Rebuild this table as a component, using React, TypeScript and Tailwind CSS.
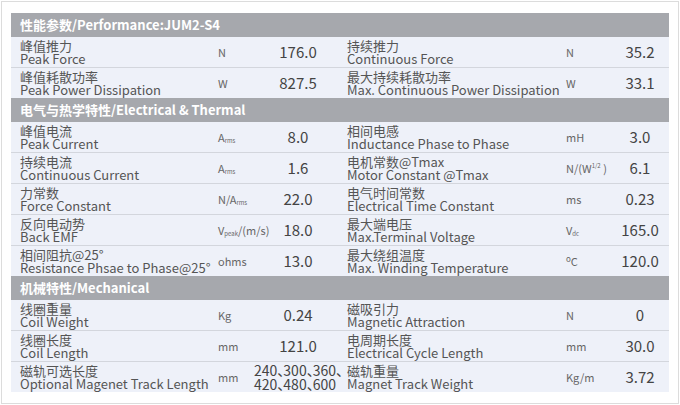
import React from "react";

type Cell = { zh: string; en: string; unit: React.ReactNode; value: React.ReactNode };
type Row = [Cell, Cell];

const U = ({ children }: { children: React.ReactNode }) => <>{children}</>;
const sub = (s: string) => <span className="text-[6px] align-[-1px]">{s}</span>;
const D = () => <span className="mr-[-8px]">、</span>;

const perf: Row[] = [
  [
    { zh: "峰值推力", en: "Peak Force", unit: "N", value: "176.0" },
    { zh: "持续推力", en: "Continuous Force", unit: "N", value: "35.2" },
  ],
  [
    { zh: "峰值耗散功率", en: "Peak Power Dissipation", unit: "W", value: "827.5" },
    { zh: "最大持续耗散功率", en: "Max. Continuous Power Dissipation", unit: "W", value: "33.1" },
  ],
];

const elec: Row[] = [
  [
    { zh: "峰值电流", en: "Peak Current", unit: <U>A{sub("rms")}</U>, value: "8.0" },
    { zh: "相间电感", en: "Inductance Phase to Phase", unit: "mH", value: "3.0" },
  ],
  [
    { zh: "持续电流", en: "Continuous Current", unit: <U>A{sub("rms")}</U>, value: "1.6" },
    {
      zh: "电机常数@Tmax",
      en: "Motor Constant @Tmax",
      unit: (
        <U>
          N/(W<span className="text-[6px] align-[5px]">1/2</span> )
        </U>
      ),
      value: "6.1",
    },
  ],
  [
    { zh: "力常数", en: "Force Constant", unit: <U>N/A{sub("rms")}</U>, value: "22.0" },
    { zh: "电气时间常数", en: "Electrical Time Constant", unit: "ms", value: "0.23" },
  ],
  [
    { zh: "反向电动势", en: "Back EMF", unit: <U>V{sub("peak")}/(m/s)</U>, value: "18.0" },
    { zh: "最大端电压", en: "Max.Terminal Voltage", unit: <U>V{sub("dc")}</U>, value: "165.0" },
  ],
  [
    { zh: "相间阻抗@25°", en: "Resistance Phsae to Phase@25°", unit: "ohms", value: "13.0" },
    {
      zh: "最大绕组温度",
      en: "Max. Winding Temperature",
      unit: (
        <U>
          <span className="text-[8px] align-[4px]">o</span>C
        </U>
      ),
      value: "120.0",
    },
  ],
];

const mech: Row[] = [
  [
    { zh: "线圈重量", en: "Coil Weight", unit: "Kg", value: "0.24" },
    { zh: "磁吸引力", en: "Magnetic Attraction", unit: "N", value: "0" },
  ],
  [
    { zh: "线圈长度", en: "Coil Length", unit: "mm", value: "121.0" },
    { zh: "电周期长度", en: "Electrical Cycle Length", unit: "mm", value: "30.0" },
  ],
  [
    {
      zh: "磁轨可选长度",
      en: "Optional Magenet Track Length",
      unit: "mm",
      value: (
        <span className="flex flex-col text-[14px] leading-[14px] text-left">
          <span>
            240<D />300<D />360<D />
          </span>
          <span>
            420<D />480<D />600
          </span>
        </span>
      ),
    },
    { zh: "磁轨重量", en: "Magnet Track Weight", unit: "Kg/m", value: "3.72" },
  ],
];

function Half({ c, right }: { c: Cell; right?: boolean }) {
  return (
    <div className={`flex h-full w-[329px] items-center ${right ? "pl-[7px]" : "pl-[9px]"}`}>
      <div
        className={`flex flex-col ${right ? "w-[219px]" : "w-[198px]"} text-[13px] leading-[13px] text-[#555] whitespace-nowrap`}
      >
        <span>{c.zh}</span>
        <span>{c.en}</span>
      </div>
      <div className={`${right ? "w-[46px]" : "w-[52px]"} text-[11px] text-[#666] whitespace-nowrap`}>
        {c.unit}
      </div>
      <div className="flex w-[56px] justify-center whitespace-nowrap text-[15px] text-[#444]">{c.value}</div>
    </div>
  );
}

function Group({ title, rows }: { title: string; rows: Row[] }) {
  return (
    <div className="flex flex-col">
      <div className="flex h-[24px] items-center bg-[#a6a8ad] pl-[9px] text-[13px] font-bold text-white">
        {title}
      </div>
      {rows.map((r, i) => (
        <div
          key={i}
          className={`flex bg-[#eef1f9] ${i < rows.length - 1 ? "h-[31px] border-b border-[#d3d6dd]" : "h-[30px]"}`}
        >
          <Half c={r[0]} />
          <Half c={r[1]} right />
        </div>
      ))}
    </div>
  );
}

export default function App() {
  return (
    <div
      className="h-[405px] w-[680px] bg-white p-[1px]"
      style={{ fontFamily: '"Noto Sans CJK SC", "Noto Sans", sans-serif' }}
    >
      <div className="h-[403px] w-[678px] border border-[#dcdcdc] pl-[9px] pt-[11px]">
        <div className="w-[658px]">
          <Group title="性能参数/Performance:JUM2-S4" rows={perf} />
          <Group title="电气与热学特性/Electrical & Thermal" rows={elec} />
          <Group title="机械特性/Mechanical" rows={mech} />
        </div>
      </div>
    </div>
  );
}
